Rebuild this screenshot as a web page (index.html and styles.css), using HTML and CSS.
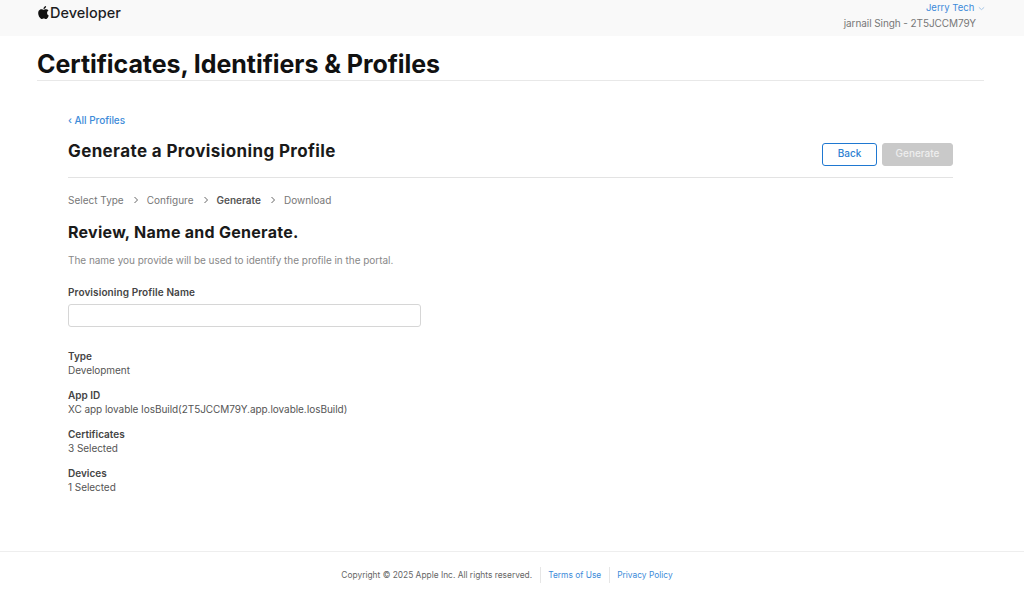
FILE: index.html
```html
<!DOCTYPE html>
<html lang="en">
<head>
<meta charset="utf-8">
<title>Certificates, Identifiers &amp; Profiles</title>
<link rel="stylesheet" href="styles.css">
</head>
<body>
<header class="topbar">
  <a class="brand">
    <svg class="apple" viewBox="0 0 24 24" aria-hidden="true"><path d="M12.152 6.896c-.948 0-2.415-1.078-3.96-1.04-2.04.027-3.91 1.183-4.961 3.014-2.117 3.675-.546 9.103 1.519 12.09 1.013 1.454 2.208 3.09 3.792 3.039 1.52-.065 2.09-.987 3.935-.987 1.831 0 2.35.987 3.96.948 1.637-.026 2.676-1.48 3.676-2.948 1.156-1.688 1.636-3.325 1.662-3.415-.039-.013-3.182-1.221-3.22-4.857-.026-3.04 2.48-4.494 2.597-4.559-1.429-2.09-3.623-2.324-4.39-2.376-2-.156-3.675 1.09-4.61 1.09zM15.53 3.83c.843-1.012 1.4-2.427 1.245-3.83-1.207.052-2.662.805-3.532 1.818-.78.896-1.454 2.338-1.273 3.714 1.338.104 2.715-.688 3.559-1.701"/></svg>
    <span>Developer</span>
  </a>
  <div class="account">
    <div class="acct-name">Jerry Tech <svg class="caret" viewBox="0 0 8 5" aria-hidden="true"><path d="M1 1.2 4 3.8 7 1.2"/></svg></div>
    <div class="acct-team">jarnail Singh - 2T5JCCM79Y</div>
  </div>
</header>

<div class="hero"><h1>Certificates, Identifiers &amp; Profiles</h1></div>

<main class="content">
  <a class="backlink">‹ All Profiles</a>
  <div class="page-head">
    <h2>Generate a Provisioning Profile</h2>
    <div class="actions">
      <button class="btn btn-back">Back</button>
      <button class="btn btn-gen" disabled>Generate</button>
    </div>
  </div>
  <nav class="steps">
    <span>Select Type</span><svg class="chev" viewBox="0 0 6 8"><path d="M1.5 1 4.5 4 1.5 7"/></svg>
    <span>Configure</span><svg class="chev" viewBox="0 0 6 8"><path d="M1.5 1 4.5 4 1.5 7"/></svg>
    <span class="current">Generate</span><svg class="chev" viewBox="0 0 6 8"><path d="M1.5 1 4.5 4 1.5 7"/></svg>
    <span>Download</span>
  </nav>
  <h3>Review, Name and Generate.</h3>
  <p class="hint">The name you provide will be used to identify the profile in the portal.</p>
  <label class="field-label" for="pname">Provisioning Profile Name</label>
  <input class="field" id="pname" type="text">
  <dl class="details">
    <div class="item"><dt>Type</dt><dd>Development</dd></div>
    <div class="item"><dt>App ID</dt><dd>XC app lovable IosBuild(2T5JCCM79Y.app.lovable.IosBuild)</dd></div>
    <div class="item"><dt>Certificates</dt><dd>3 Selected</dd></div>
    <div class="item"><dt>Devices</dt><dd>1 Selected</dd></div>
  </dl>
</main>

<footer class="footer">
  <span class="copy">Copyright © 2025 Apple Inc. All rights reserved.</span>
  <a class="flink">Terms of Use</a>
  <a class="flink">Privacy Policy</a>
</footer>
</body>
</html>
```
FILE: styles.css
```css
* { box-sizing: border-box; }
html, body { margin: 0; padding: 0; }
body {
  font-family: Inter, "Liberation Sans", sans-serif;
  color: #1d1d1f;
  background: #fff;
  height: 603px;
  overflow: hidden;
}
.topbar {
  height: 36px;
  background: #f9f9f9;
  display: flex;
  justify-content: space-between;
  align-items: flex-start;
  padding: 0 48px 0 38px;
}
.brand { display: flex; align-items: center; height: 25px; font-size: 14.5px; font-weight: 500; color: #1d1d1f; }
.apple { width: 13px; height: 13px; fill: #111; margin-left: -1px; }
.account { text-align: right; font-size: 10px; line-height: 15px; }
.acct-name { color: #3d8bd9; font-size: 9.5px; margin-right: -9px; }
.caret { width: 7px; height: 5px; fill: none; stroke: #9bbfe3; stroke-width: 1; margin-left: 1px; }
.acct-team { color: #777; margin-top: 1px; letter-spacing: -0.08px; }
.hero { margin: 0 40px 0 37px; height: 45px; border-bottom: 1px solid #e8e8e8; }
h1 { margin: 0; font-size: 25px; line-height: 36px; padding-top: 10px; font-weight: 700; letter-spacing: -0.06px; color: #111; white-space: nowrap; }
.content { margin: 0 71px 0 68px; padding-top: 32px; }
.backlink { display: block; font-size: 10px; line-height: 14px; color: #3d8bd9; font-weight: 500; letter-spacing: -0.05px; }
.page-head {
  display: flex; justify-content: space-between; align-items: flex-start;
  height: 42px; margin-top: 9px; border-bottom: 1px solid #e3e3e3;
}
h2 { margin: 0; font-size: 17px; line-height: 24px; font-weight: 700; color: #1a1a1a; padding-top: 3px; letter-spacing: 0.38px; }
.actions { display: flex; gap: 5px; padding-top: 7px; }
.btn { height: 23px; font-family: inherit; font-size: 10px; font-weight: 500; border-radius: 3px; padding: 0 0 3px; }
.btn-back { width: 55px; background: #fff; color: #2e7fd1; border: 1px solid #1f78d1; }
.btn-gen { width: 71px; background: #c9c9c9; color: #eee; border: 1px solid #c9c9c9; }
.steps { display: flex; align-items: center; height: 14px; margin-top: 15px; font-size: 10px; color: #777; }
.steps .current { color: #555; font-weight: 600; }
.chev { width: 6px; height: 8px; margin: 0 8px 0 9px; fill: none; stroke: #666; stroke-width: 1; }
h3 { margin: 14px 0 0; font-size: 16px; line-height: 22px; font-weight: 700; color: #1a1a1a; letter-spacing: 0.27px; }
.hint { margin: 10px 0 0; font-size: 10px; line-height: 14px; color: #888; letter-spacing: -0.03px; }
.field-label { display: block; margin-top: 18px; font-size: 10px; line-height: 14px; font-weight: 600; color: #444; letter-spacing: 0.1px; }
.field { display: block; margin-top: 5px; width: 353px; height: 23px; background: #fff; border: 1px solid #d6d6d6; border-radius: 3px; padding: 0 6px; }
.details { margin: 22px 0 0; }
.item { height: 39px; }
dt { font-size: 10px; line-height: 14px; font-weight: 600; color: #444; }
dd { margin: 0; font-size: 10px; line-height: 14px; color: #555; letter-spacing: -0.05px; }
.footer {
  position: absolute; left: 0; right: 0; top: 551px; height: 52px;
  border-top: 1px solid #eee;
  display: flex; justify-content: center; align-items: flex-start;
  padding: 15px 2px 0 0; font-size: 8.4px; line-height: 16px; color: #666;
}
.copy { padding-right: 8px; }
.flink { color: #3d8bd9; border-left: 1px solid #e6e6e6; padding: 0 8px 0 7px; }
```
